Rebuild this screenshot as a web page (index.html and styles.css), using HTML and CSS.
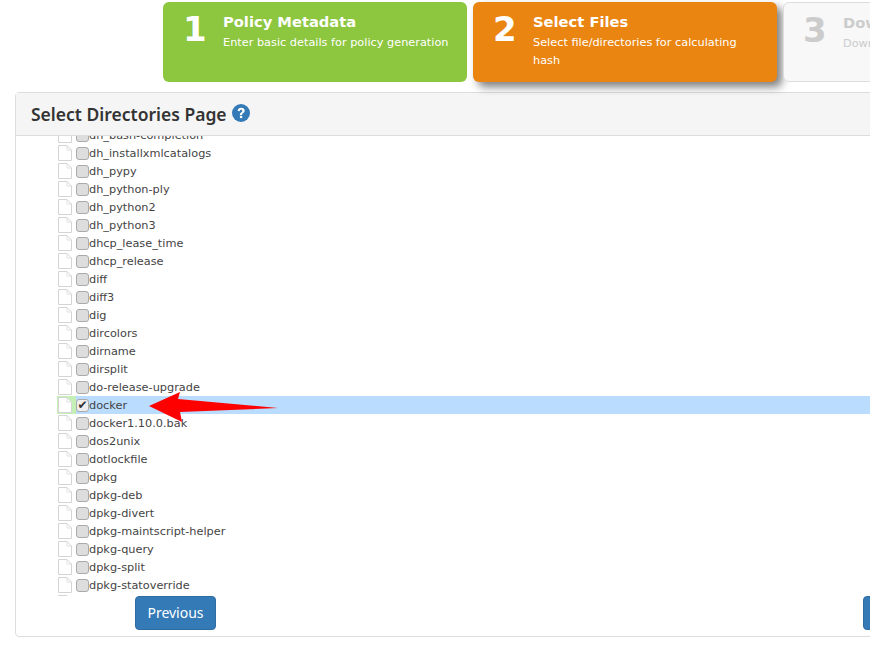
FILE: index.html
```html
<!DOCTYPE html>
<html lang="en">
	<head>
		<meta charset="UTF-8" />
		<title>Select Files</title>
		<link rel="stylesheet" href="styles.css">
	</head>
	<body>
		<svg class="defs" width="0" height="0">
			<symbol id="file" viewBox="0 0 19 18">
				<path d="M1.5 1.5H10L14.5 6V16.5H1.5Z" fill="#fff" stroke="#d4d4d4" />
				<path d="M10 1.5V6H14.5" fill="none" stroke="#e0e0e0" />
			</symbol>
		</svg>

		<div class="steps">
			<div class="step step-done">
				<div class="step-num">1</div>
				<div class="step-text">
					<h4>Policy Metadata</h4>
					<p>Enter basic details for policy generation</p>
				</div>
			</div>
			<div class="step step-active">
				<div class="step-num">2</div>
				<div class="step-text">
					<h4>Select Files</h4>
					<p>Select file/directories for calculating hash</p>
				</div>
			</div>
			<div class="step step-next">
				<div class="step-num">3</div>
				<div class="step-text">
					<h4>Download Policy</h4>
					<p>Download generated policy</p>
				</div>
			</div>
		</div>

		<div class="panel">
			<div class="panel-heading">
				<h3>Select Directories Page</h3>
				<svg class="help" viewBox="0 0 18 18" width="18" height="18">
					<circle cx="9" cy="9" r="9" fill="#337ab7" />
					<path d="M5.6 7C5.8 4.9 7.3 3.8 9.2 3.8C11.2 3.8 12.7 5 12.7 6.8C12.7 9 10.1 9 10.1 10.9H7.9C7.9 8.2 10.3 8.2 10.3 6.9C10.3 6.2 9.8 5.8 9.1 5.8C8.4 5.8 7.9 6.3 7.8 7.2Z" fill="#fff" />
					<rect x="7.9" y="11.8" width="2.3" height="2.3" fill="#fff" />
				</svg>
			</div>
			<div class="tree">
				<ul class="tree-list">
					<li><svg class="file"><use href="#file" /></svg><span class="check"></span>dh_bash-completion</li>
					<li><svg class="file"><use href="#file" /></svg><span class="check"></span>dh_installxmlcatalogs</li>
					<li><svg class="file"><use href="#file" /></svg><span class="check"></span>dh_pypy</li>
					<li><svg class="file"><use href="#file" /></svg><span class="check"></span>dh_python-ply</li>
					<li><svg class="file"><use href="#file" /></svg><span class="check"></span>dh_python2</li>
					<li><svg class="file"><use href="#file" /></svg><span class="check"></span>dh_python3</li>
					<li><svg class="file"><use href="#file" /></svg><span class="check"></span>dhcp_lease_time</li>
					<li><svg class="file"><use href="#file" /></svg><span class="check"></span>dhcp_release</li>
					<li><svg class="file"><use href="#file" /></svg><span class="check"></span>diff</li>
					<li><svg class="file"><use href="#file" /></svg><span class="check"></span>diff3</li>
					<li><svg class="file"><use href="#file" /></svg><span class="check"></span>dig</li>
					<li><svg class="file"><use href="#file" /></svg><span class="check"></span>dircolors</li>
					<li><svg class="file"><use href="#file" /></svg><span class="check"></span>dirname</li>
					<li><svg class="file"><use href="#file" /></svg><span class="check"></span>dirsplit</li>
					<li><svg class="file"><use href="#file" /></svg><span class="check"></span>do-release-upgrade</li>
					<li class="selected"><svg class="file"><use href="#file" /></svg><span class="check checked">✔</span>docker</li>
					<li><svg class="file"><use href="#file" /></svg><span class="check"></span>docker1.10.0.bak</li>
					<li><svg class="file"><use href="#file" /></svg><span class="check"></span>dos2unix</li>
					<li><svg class="file"><use href="#file" /></svg><span class="check"></span>dotlockfile</li>
					<li><svg class="file"><use href="#file" /></svg><span class="check"></span>dpkg</li>
					<li><svg class="file"><use href="#file" /></svg><span class="check"></span>dpkg-deb</li>
					<li><svg class="file"><use href="#file" /></svg><span class="check"></span>dpkg-divert</li>
					<li><svg class="file"><use href="#file" /></svg><span class="check"></span>dpkg-maintscript-helper</li>
					<li><svg class="file"><use href="#file" /></svg><span class="check"></span>dpkg-query</li>
					<li><svg class="file"><use href="#file" /></svg><span class="check"></span>dpkg-split</li>
					<li><svg class="file"><use href="#file" /></svg><span class="check"></span>dpkg-statoverride</li>
					<li><svg class="file"><use href="#file" /></svg><span class="check"></span>dpkg-trigger</li>
				</ul>
			</div>
			<div class="actions">
				<button>Previous</button>
				<button>Next</button>
			</div>
		</div>

		<svg class="arrow" viewBox="0 0 132 32" width="132" height="32">
			<polygon points="1,15 32,1 30,8 130,17 32,21 34,31" fill="#f00" />
		</svg>
	</body>
</html>
```

FILE: styles.css
```css
html,
body {
	height: 100%;
}

body {
	font-family: 'DejaVu Sans', Verdana, sans-serif;
	background-color: #ffffff;
	color: #333333;
	margin: 0;
	padding: 2px 0 0;
	box-sizing: border-box;
	overflow: hidden;
	position: relative;
}

.defs {
	position: absolute;
}

.steps {
	display: flex;
	gap: 6px;
	margin-left: 163px;
	width: 1000px;
}

.step {
	flex: 0 0 304px;
	box-sizing: border-box;
	height: 80px;
	border-radius: 6px;
	display: flex;
	color: #ffffff;
	padding: 0 15px 0 20px;
}

.step-done {
	background-color: #8dc63f;
}

.step-active {
	background-color: #ea8511;
	box-shadow: 5px 5px 8px rgba(0, 0, 0, 0.5);
}

.step-next {
	background-color: #f8f8f8;
	border: 1px solid #dddddd;
	color: #cccccc;
	padding-left: 19px;
}

.step-num {
	flex: 0 0 40px;
	font-size: 34px;
	font-weight: bold;
	line-height: 54px;
}

.step-text h4 {
	margin: 11px 0 0;
	font-size: 14.7px;
	line-height: 18px;
}

.step-text p {
	margin: 3px 0 0;
	font-size: 11.3px;
	line-height: 18px;
}

.panel {
	width: 1100px;
	box-sizing: border-box;
	margin: 10px 0 0 15px;
	border: 1px solid #dddddd;
	border-radius: 4px;
	height: 545px;
}

.panel-heading {
	background-color: #f5f5f5;
	border-bottom: 1px solid #dddddd;
	height: 43px;
	box-sizing: border-box;
	padding-left: 15px;
	display: flex;
	align-items: center;
	gap: 5px;
}

.panel-heading h3 {
	margin: 0;
	font-family: 'Noto Sans', 'Open Sans', sans-serif;
	font-size: 17.5px;
	font-weight: 600;
}

.help {
	margin-top: -3px;
}

.tree {
	height: 460px;
	overflow: hidden;
}

.tree-list {
	list-style: none;
	margin: -10px 0 0;
	padding: 0 0 0 41px;
	font-size: 11.3px;
}

.tree-list li {
	display: flex;
	align-items: center;
	height: 18px;
	white-space: nowrap;
	color: #444444;
}

.file {
	width: 19px;
	height: 18px;
	flex: none;
}

.check {
	width: 13px;
	height: 13px;
	box-sizing: border-box;
	margin: 1px 0 0;
	border: 1px solid #aaaaaa;
	border-radius: 3px;
	background-color: #dddddd;
	flex: none;
	font-size: 12px;
	line-height: 11px;
	text-align: center;
	color: #333333;
}

.selected {
	background-color: #b9dcff;
}

.selected .file {
	background-color: #c4f0b8;
}

.checked {
	background-color: #eeeeee;
}

.actions {
	display: flex;
	gap: 647px;
	padding-left: 119px;
}

button {
	font-family: 'Noto Sans', 'Open Sans', sans-serif;
	font-size: 14px;
	color: #ffffff;
	background-color: #337ab7;
	border: 1px solid #2e6da4;
	border-radius: 4px;
	width: 81px;
	height: 34px;
	padding: 0 0 2px;
}

.arrow {
	position: absolute;
	left: 148px;
	top: 391px;
}
```
